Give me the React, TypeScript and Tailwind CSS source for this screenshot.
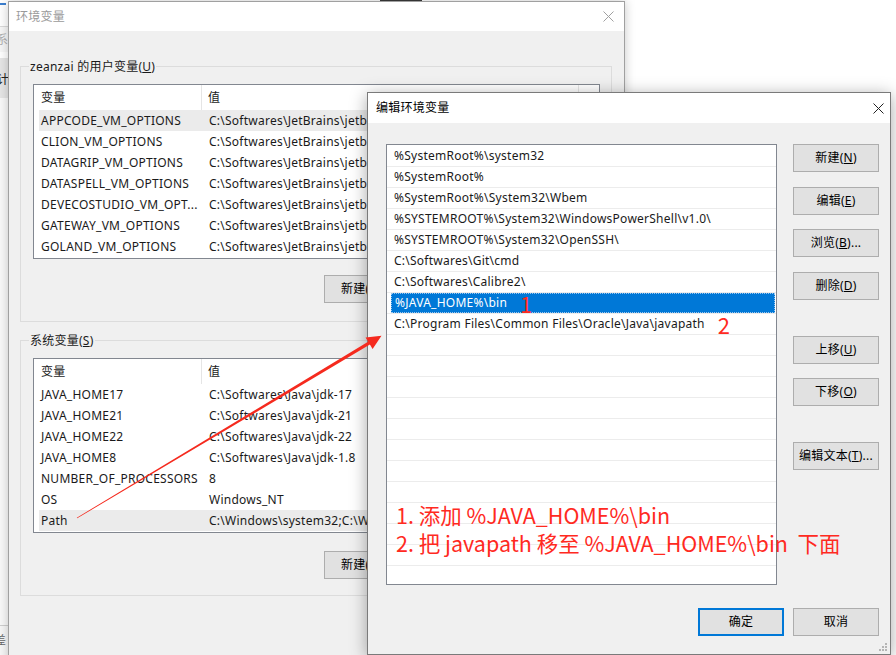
import React from 'react';

const userVars = [
  ['APPCODE_VM_OPTIONS', 'C:\\Softwares\\JetBrains\\jetbra-vmoptions\\appcode.vmoptions'],
  ['CLION_VM_OPTIONS', 'C:\\Softwares\\JetBrains\\jetbra-vmoptions\\clion.vmoptions'],
  ['DATAGRIP_VM_OPTIONS', 'C:\\Softwares\\JetBrains\\jetbra-vmoptions\\datagrip.vmoptions'],
  ['DATASPELL_VM_OPTIONS', 'C:\\Softwares\\JetBrains\\jetbra-vmoptions\\dataspell.vmoptions'],
  ['DEVECOSTUDIO_VM_OPT...', 'C:\\Softwares\\JetBrains\\jetbra-vmoptions\\devecostudio.vmoptions'],
  ['GATEWAY_VM_OPTIONS', 'C:\\Softwares\\JetBrains\\jetbra-vmoptions\\gateway.vmoptions'],
  ['GOLAND_VM_OPTIONS', 'C:\\Softwares\\JetBrains\\jetbra-vmoptions\\goland.vmoptions'],
];

const sysVars = [
  ['JAVA_HOME17', 'C:\\Softwares\\Java\\jdk-17'],
  ['JAVA_HOME21', 'C:\\Softwares\\Java\\jdk-21'],
  ['JAVA_HOME22', 'C:\\Softwares\\Java\\jdk-22'],
  ['JAVA_HOME8', 'C:\\Softwares\\Java\\jdk-1.8'],
  ['NUMBER_OF_PROCESSORS', '8'],
  ['OS', 'Windows_NT'],
  ['Path', 'C:\\Windows\\system32;C:\\Windows;C:\\Windows\\System32\\Wbem'],
];

const pathItems = [
  '%SystemRoot%\\system32',
  '%SystemRoot%',
  '%SystemRoot%\\System32\\Wbem',
  '%SYSTEMROOT%\\System32\\WindowsPowerShell\\v1.0\\',
  '%SYSTEMROOT%\\System32\\OpenSSH\\',
  'C:\\Softwares\\Git\\cmd',
  'C:\\Softwares\\Calibre2\\',
  '%JAVA_HOME%\\bin',
  'C:\\Program Files\\Common Files\\Oracle\\Java\\javapath',
  '', '', '', '', '', '', '', '', '', '', '', '',
];

function CloseIcon({ color }: { color: string }) {
  return (
    <svg width="11" height="11" viewBox="0 0 11 11">
      <path d="M0.5 0.5 L10.5 10.5 M10.5 0.5 L0.5 10.5" stroke={color} strokeWidth="1" />
    </svg>
  );
}

function Btn({ children, w = 'w-[86px]', primary = false }: { children: React.ReactNode; w?: string; primary?: boolean }) {
  return (
    <div
      className={`${w} h-[28px] flex items-center justify-center bg-[#e1e1e1] text-[12px] text-black ${
        primary ? 'border-2 border-[#0078d7]' : 'border border-[#adadad]'
      }`}
    >
      {children}
    </div>
  );
}

// the part right of x=368 is hidden by the edit dialog, so value cells stop there
function VarList({ rows, selected }: { rows: string[][]; selected: number }) {
  return (
    <div className="w-[567px] h-[175px] border border-[#828790] bg-white flex flex-col">
      {/* header */}
      <div className="h-[25px] flex items-center shrink-0">
        <div className="w-[168px] h-full pl-[7px] flex items-center border-r border-[#e5e5e5]">变量</div>
        <div className="w-[377px] h-full pl-[6px] flex items-center border-r border-[#e5e5e5]">值</div>
      </div>
      {rows.map(([k, v], i) => (
        <div
          key={k}
          className={`h-[21px] ml-[5px] flex items-center whitespace-nowrap shrink-0 ${i === selected ? 'bg-[#ebebeb]' : ''}`}
        >
          <div className="w-[163px] pl-[2px] overflow-hidden">{k}</div>
          <div className="w-[166px] pl-[7px] overflow-hidden">{v}</div>
        </div>
      ))}
    </div>
  );
}

function GroupBox({ label, children }: { label: React.ReactNode; children: React.ReactNode }) {
  return (
    <div className="relative w-[592px] h-[256px] border border-[#dcdcdc] pt-[17px] pl-[12px]">
      <span className="absolute left-[8px] -top-[9px] px-[1px] leading-[17px] bg-[#f0f0f0]">{label}</span>
      {children}
    </div>
  );
}

function EnvDialog() {
  return (
    <div className="absolute left-[8px] top-[1px] w-[617px] h-[690px] border border-[#a0a0a0] bg-[#f0f0f0] shadow-[0_0_10px_rgba(0,0,0,0.22)] flex flex-col">
      <div className="h-[29px] bg-white flex items-center justify-between pl-[7px] pr-[10px] shrink-0">
        <span className="text-[#9a9a9a]">环境变量</span>
        <CloseIcon color="#a0a0a0" />
      </div>
      <div className="pl-[11px] pt-[35px] flex flex-col">
        <GroupBox
          label={
            <>
              zeanzai 的用户变量(<span className="underline">U</span>)
            </>
          }
        >
          <VarList rows={userVars} selected={0} />
          <div className="mt-[16px] ml-[291px]">
            <Btn w="w-[86px] justify-start pl-[16px] overflow-hidden">新建(</Btn>
          </div>
        </GroupBox>
        <div className="h-[18px]" />
        <GroupBox
          label={
            <>
              系统变量(<span className="underline">S</span>)
            </>
          }
        >
          <VarList rows={sysVars} selected={6} />
          <div className="mt-[18px] ml-[291px]">
            <Btn w="w-[86px] justify-start pl-[16px] overflow-hidden">新建(</Btn>
          </div>
        </GroupBox>
      </div>
    </div>
  );
}

function EditDialog() {
  return (
    <div className="absolute left-[367px] top-[92px] w-[524px] h-[563px] border border-[#7a7a7a] bg-[#f0f0f0] shadow-[0_3px_16px_rgba(0,0,0,0.35)] flex flex-col">
      <div className="h-[30px] bg-white flex items-center justify-between pl-[8px] pr-[6px] shrink-0">
        <span className="text-black">编辑环境变量</span>
        <CloseIcon color="#222" />
      </div>
      <div className="flex pl-[18px] pt-[21px]">
        <div className="relative w-[391px] h-[441px] border border-[#828790] bg-white overflow-hidden pt-[1px]">
          {pathItems.map((p, i) => (
            <div key={i} className="h-[21px] border-b border-[#ececec] flex items-stretch whitespace-nowrap">
              {i === 7 ? (
                <div className="flex-1 ml-[4px] mr-[1px] bg-[#0078d7] text-white pl-[3px] flex items-center border border-dotted border-[#9cc7ee]">
                  {p}
                  <span className="ml-[13px] text-[#ff2a1f] text-[22px] leading-[19px] tracking-normal font-['Noto_Sans_CJK_SC',sans-serif]">1</span>
                </div>
              ) : (
                <div className="pl-[7px] flex items-center">
                  {p}
                  {i === 8 && (
                    <span className="ml-[13px] text-[#ff2a1f] text-[22px] leading-[19px] tracking-normal font-['Noto_Sans_CJK_SC',sans-serif]">2</span>
                  )}
                </div>
              )}
            </div>
          ))}
        </div>
        <div className="ml-[16px] flex flex-col">
          <Btn>
            新建(<span className="underline">N</span>)
          </Btn>
          <div className="mt-[15px]">
            <Btn>
              编辑(<span className="underline">E</span>)
            </Btn>
          </div>
          <div className="mt-[14px]">
            <Btn>
              浏览(<span className="underline">B</span>)...
            </Btn>
          </div>
          <div className="mt-[15px]">
            <Btn>
              删除(<span className="underline">D</span>)
            </Btn>
          </div>
          <div className="mt-[36px]">
            <Btn>
              上移(<span className="underline">U</span>)
            </Btn>
          </div>
          <div className="mt-[14px]">
            <Btn>
              下移(<span className="underline">O</span>)
            </Btn>
          </div>
          <div className="mt-[36px]">
            <Btn>
              编辑文本(<span className="underline">T</span>)...
            </Btn>
          </div>
        </div>
      </div>
      <div className="flex justify-end gap-[9px] pr-[11px] mt-[23px]">
        <Btn primary>确定</Btn>
        <Btn>取消</Btn>
      </div>
      {/* resize grip */}
      <svg className="absolute right-[2px] bottom-[2px]" width="10" height="10" viewBox="0 0 10 10">
        {[
          [8, 2], [8, 5], [5, 5], [8, 8], [5, 8], [2, 8],
        ].map(([x, y], i) => (
          <rect key={i} x={x - 1} y={y - 1} width="2" height="2" fill="#b5b5b5" />
        ))}
      </svg>
    </div>
  );
}

function BackWindow() {
  return (
    <div className="absolute left-0 top-0 w-[8px] h-[655px] bg-[#f7f7f7] overflow-hidden flex flex-col whitespace-nowrap tracking-normal">
      <div className="h-[27px] bg-white border-b border-[#dadada] shrink-0">
        <div className="mt-[3px] w-[6px] h-[2px] bg-[#3c7fd0]" />
      </div>
      <div className="h-[25px] flex items-center -ml-[4px] text-[#b0b0b0] shrink-0">系统</div>
      <div className="h-[6px] bg-white shrink-0" />
      <div className="h-[40px] bg-[#e6e6e6] flex items-center -ml-[3px] text-[#222] shrink-0 pt-[4px]">计</div>
      <div className="flex-1 bg-[#f9f9f9]" />
      <div className="h-[30px] border-t border-[#cfcfcf] flex items-center -ml-[6px] text-[#666] shrink-0">差</div>
    </div>
  );
}

function Arrow() {
  return (
    <svg className="absolute left-0 top-0 pointer-events-none" width="896" height="655" viewBox="0 0 896 655">
      <polygon
        points="77.2,518.3 369.9,344.6 372.6,348.9 381.5,335.8 365.6,337.6 368.1,341.8 76.8,517.7"
        fill="#f52a1e"
      />
    </svg>
  );
}

export default function App() {
  return (
    <div className="relative w-[896px] h-[655px] overflow-hidden bg-white text-[12px] tracking-[0.25px] text-[#1a1a1a] font-['Noto_Sans','Noto_Sans_CJK_SC',sans-serif]">
      <BackWindow />
      <div className="absolute left-[380px] top-0 w-[42px] h-[2px] bg-[#3a3a3a]" />
      <EnvDialog />
      <EditDialog />
      <Arrow />
      {/* annotation pasted over the list */}
      <div className="absolute left-[396px] top-[501px] text-[#ff2a1f] text-[21.5px] leading-[28px] tracking-normal whitespace-nowrap font-['Noto_Sans_CJK_SC',sans-serif]">
        <div>1. 添加 %JAVA_HOME%\bin</div>
        <div>2. 把 javapath 移至 %JAVA_HOME%\bin&nbsp; 下面</div>
      </div>
    </div>
  );
}
